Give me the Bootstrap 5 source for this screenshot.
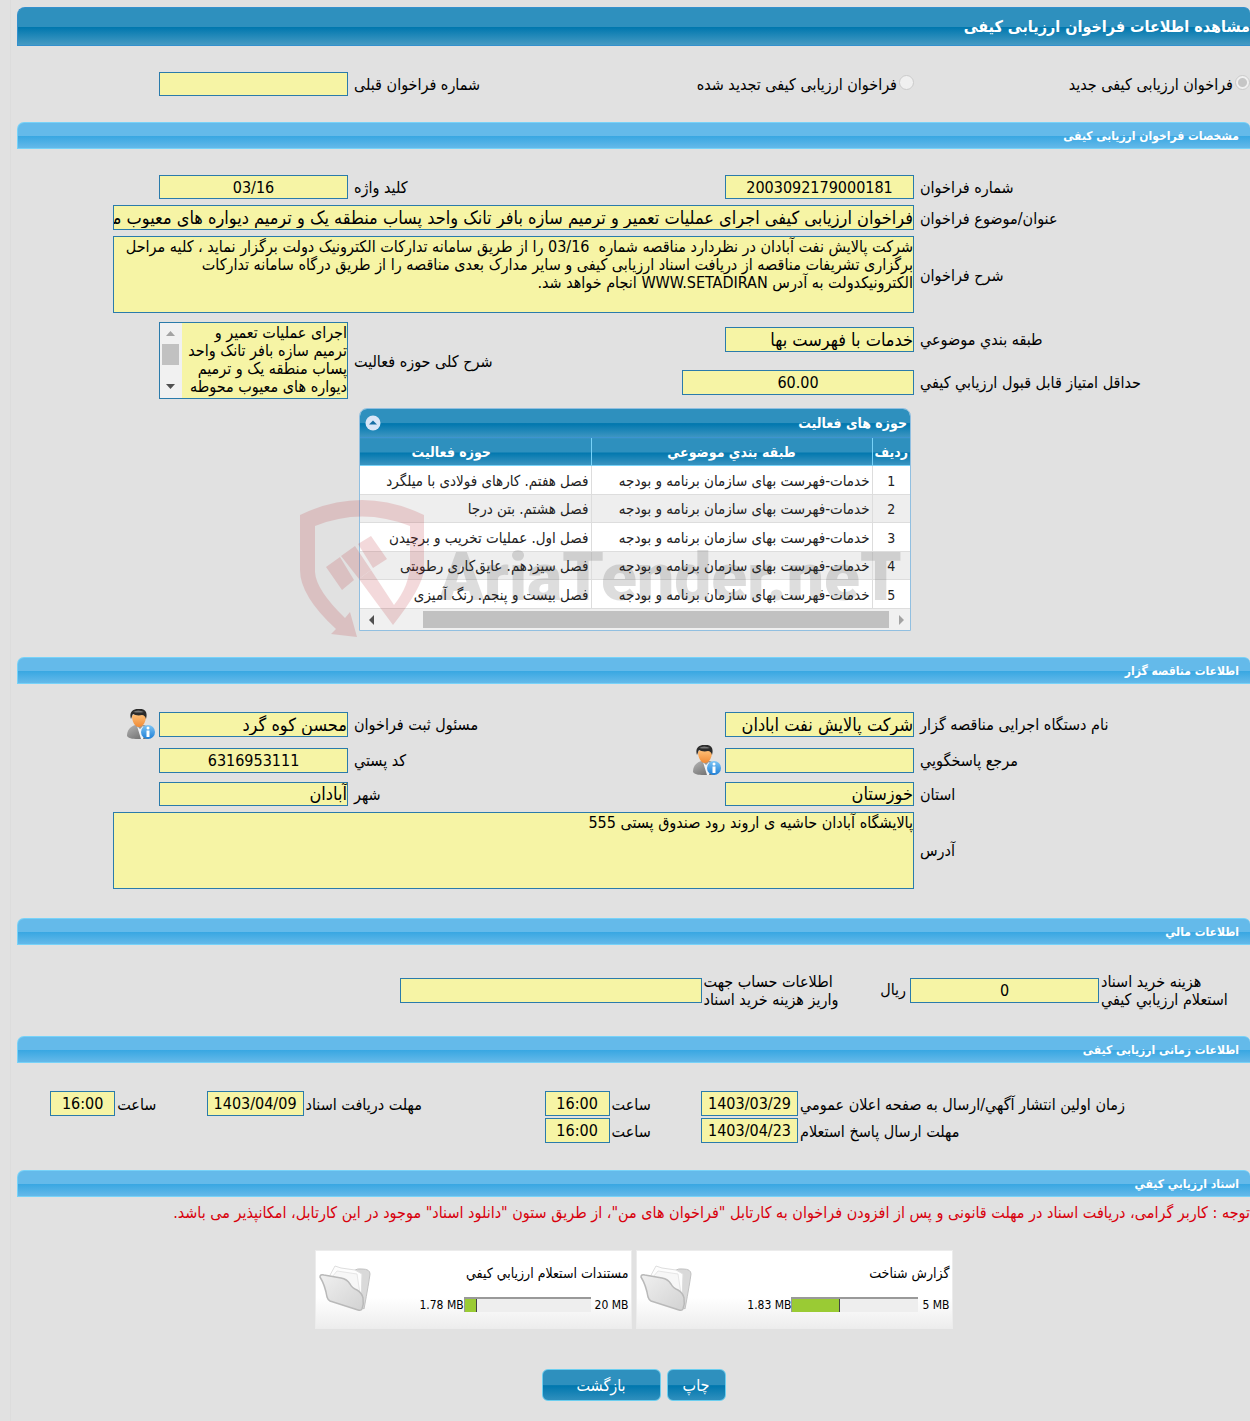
<!DOCTYPE html>
<html lang="fa" dir="rtl">
<head>
<meta charset="utf-8">
<meta name="viewport" content="width=device-width, initial-scale=1">
<title>مشاهده اطلاعات فراخوان ارزیابی کیفی</title>
<link rel="stylesheet" href="https://cdn.jsdelivr.net/npm/bootstrap@5.3.0/dist/css/bootstrap.min.css">
<script src="https://cdn.jsdelivr.net/npm/bootstrap@5.3.0/dist/js/bootstrap.bundle.min.js"></script>
<style>
body{background:#e1e1e1;color:#000;font:16px/18px "DejaVu Sans Condensed","DejaVu Sans",sans-serif;overflow-x:hidden}
.sheet{margin-left:10px;padding:7px 0 0 6px;border-left:1px solid #dcdcdc;position:relative}
.title-bar{height:39px;border:1px solid #3390cd;border-right:0;border-radius:8px 6px 0 0;color:#fff;font-size:16px;line-height:24px;font-weight:bold;background:linear-gradient(#2e90be 0 50%,#0077ae 52%,#459ac3)}
.sect-bar{height:27px;border:1px solid #77d2f8;border-right:0;border-radius:7px 6px 0 0;color:#fff;font-size:12px;font-weight:bold;padding:2px 11px 0;background:linear-gradient(#64baea 0 50%,#38a7e2 52%,#64b9e9)}
.form-grid{display:grid;grid-template-columns:330fr 287fr 279fr 337fr}
.time-grid{display:grid;grid-template-columns:450fr 97px 91fr 65px 240fr 97px 91fr 65px 33fr}
.money-grid{display:grid;grid-template-columns:150fr 189px 207fr 302px 380fr}
.form-grid>*,.time-grid>*,.money-grid>*{display:flex;align-items:center;min-width:0}
.kind-grid{padding:26px 0}
.call-grid{padding:26px 0 9px;row-gap:6px}
.area-grid{padding-bottom:9px;row-gap:9px}
.org-grid{padding:24px 0 29px;grid-template-rows:32px 40px 27px auto}
.money-grid{padding:26px 0 27px}
.time-grid{padding:28px 0 27px;row-gap:2px}
.two-rows{grid-row:span 2}
.addr-gap{padding-top:5px}
.lbl{justify-content:flex-end;white-space:nowrap;margin:0;text-align:left}
.lbl:not(.addr-gap),.kind{padding-top:2px}
.time-grid .lbl,.money-grid .lbl{padding-left:2px}
.cell{padding-right:6px}
.wide{grid-column:2/5}
.fld,.fld:focus{border:1px solid #2a7bab;border-radius:0;background:#f6f4a5;color:#000;padding:0;line-height:20px;font-size:18px;height:25px;width:189px;box-shadow:none}
.fld.digits{font-size:16px}
.fld.low{height:24px;min-height:24px}
.fld.w-wide{width:801px;max-width:100%}
.fld.w-score{width:232px}
textarea.fld,textarea.fld:focus{font-size:16px;line-height:18px;height:77px;min-height:77px;resize:none;overflow:hidden;padding:1px 0 0;display:block;white-space:pre}
.fill .fld{width:100%}
.rad{appearance:none;width:15px;height:15px;border:1px solid #cbcbcb;border-radius:50%;background:#f0f0f0;margin:0 0 5px 2px;flex:none}
.rad:checked{background:radial-gradient(#c6c6c6 0 4px,#f0f0f0 5px)}
.scroll-box{display:flex;border:1px solid #2a7bab;width:189px;background:#f6f4a5}
.scroll-box textarea.fld{border:0;width:165px;height:75px;min-height:75px}
.v-scroll{width:22px;background:#f1f1f1}
.act-panel{width:552px;margin-right:339px;border:1px solid #91bfe0;border-radius:8px 8px 0 0;overflow:hidden;background:#fff}
.act-head{height:28px;padding:0 3px 0 5px;color:#fff;font-size:14px;font-weight:bold;background:linear-gradient(#2e90be 0 50%,#0077ae 52%,#3d95c1)}
.act-table{width:100%;table-layout:fixed;border-collapse:collapse;margin:0;color:#222;font-size:15px}
.act-table th{height:28px;padding:0;text-align:center;color:#fff;font-size:14px;background:linear-gradient(#2e90be 0 50%,#0077ae 52%,#3d95c1);border-top:1px solid #3d94d1;border-bottom:1px solid #77d2f8}
.act-table th+th{border-right:1px solid #77d2f8}
.act-table td{height:28px;padding:1px 2px 0;white-space:nowrap;border-bottom:1px solid #ddd}
.act-table tr:nth-child(odd) td{height:29px}
.act-table tr:nth-child(even) td{background:#eee}
.act-table td+td{border-right:1px solid #ddd}
.act-table .row-no{font-size:14px}
.h-scroll{height:21px;background:#f0f0f0;padding:2px 4px 2px 8px}
.h-scroll .thumb{height:17px;width:466px;background:#c1c1c1}
.gap-top{margin-top:26px}
.notice{color:#d8000c;white-space:nowrap;padding:7px 0 28px;margin:0}
.doc-box{width:317px;height:79px;border:1px solid #ececec;background:linear-gradient(#fff 60%,#ededed);font-size:12px;padding:0 2px 2px 3px}
.doc-name{font-size:14px;margin-bottom:14px}
.doc-bar{width:127px;height:15px;border-radius:0;background:#eee;border:solid #999;border-width:2px 0 0 1px}
.doc-bar .progress-bar{background:#9acb34;border-right:1px solid #444}
.btn-row{gap:6px;padding:40px 0 20px}
.act-btn,.act-btn:hover{height:32px;color:#fff;font-size:16px;line-height:18px;border:1px solid #6cceef;border-radius:6px;padding:2px 0 0;width:59px;background:linear-gradient(#2e90be 0 50%,#0077ae 52%,#2f8fbd)}
.act-btn.wider{width:119px}
.wm{position:absolute;left:279px;top:500px;opacity:.16;pointer-events:none;width:620px;height:140px}
.wm-text{position:absolute;left:149px;top:33px;font:900 66px/90px Roboto,"DejaVu Sans Condensed",sans-serif;color:#333}
</style>
</head>
<body>
<svg width="0" height="0" class="position-absolute" aria-hidden="true">
<defs>
<linearGradient id="skin" x2="0" y2="1"><stop stop-color="#ffc27a"/><stop offset="1" stop-color="#f08a35"/></linearGradient>
<linearGradient id="suit" x2="1" y2="1"><stop stop-color="#b5b5b5"/><stop offset="1" stop-color="#606060"/></linearGradient>
<linearGradient id="info" x2="0" y2="1"><stop stop-color="#7cc4f5"/><stop offset="1" stop-color="#1f7fd6"/></linearGradient>
<linearGradient id="fold" x2="1" y2="1"><stop stop-color="#f0f0f0"/><stop offset="1" stop-color="#d2d2d2"/></linearGradient>
<symbol id="person" viewBox="0 0 28 31">
<path d="M0 27C0 21 3 18 8 16h9c5 2 8 5 8 11-2 3-6 3-12 3S2 30 0 27z" fill="url(#suit)"/>
<path d="M10 17l3 3 3-3 3 4-3 9h-2z" fill="#f2f4f7"/>
<path d="M5 7c0 6 3 11 7 11S19 13 19 7c-2-2-11-4-14 0z" fill="url(#skin)"/>
<path d="M4 10C2 4 5 0 11 0c7-1 10 3 8 10-1-3-2-4-4-4-4 1-7 0-9-1-1 1-1 3-2 5z" fill="#2b2b2b"/><path d="M6 3q5-3 11 0-5 1-11 0z" fill="#777"/>
<circle cx="21" cy="23" r="7" fill="url(#info)"/><circle cx="21" cy="19" r="1.500" fill="#fff"/><path d="M19.500 21.500h3V28h-3z" fill="#fff"/>
</symbol>
<symbol id="folder" viewBox="0 0 52 48">
<path d="M34 6q5-3 9-2 8 0 8 5-1 8-6 35l-10-8z" fill="#d9d9d9" stroke="#c2c2c2"/>
<path d="M10 12L16 1l6 2 14 2 7 4-1 28-28-14z" fill="#fdfdfd" stroke="#dedede"/><path d="M13 12l5-6 20 3 3 20z" fill="#f7f7f7" stroke="#e6e6e6"/>
<path d="M1 12q0-3 4-2l17 3q6 1 9 6 2 4 7 6 5 3 6 8 1 6-1 11-1 2-4 1L11 36q-2-1-3-4-2-12-7-20z" fill="url(#fold)" stroke="#b9b9b9" stroke-width="1.500"/>
</symbol>
</defs>
</svg>
<main class="sheet">
<h1 class="title-bar d-flex align-items-center m-0">مشاهده اطلاعات فراخوان ارزیابی کیفی</h1>
<div class="form-grid kind-grid">
  <label class="kind text-nowrap"><input class="rad" type="radio" name="kind" checked disabled>فراخوان ارزیابی کیفی جدید</label>
  <label class="kind cell text-nowrap"><input class="rad" type="radio" name="kind" disabled>فراخوان ارزیابی کیفی تجدید شده</label>
  <label class="lbl" for="prev">شماره فراخوان قبلی</label>
  <div class="cell"><input class="form-control fld low" id="prev" readonly></div>
</div>

<h2 class="sect-bar d-flex align-items-center m-0">مشخصات فراخوان ارزیابی کیفی</h2>
<div class="form-grid call-grid">
  <label class="lbl" for="num">شماره فراخوان</label>
  <div class="cell"><input class="form-control fld low digits text-center" id="num" value="2003092179000181" readonly></div>
  <label class="lbl" for="key">کلید واژه</label>
  <div class="cell"><input class="form-control fld low digits text-center" id="key" value="03/16" readonly></div>
  <label class="lbl" for="subj">عنوان/موضوع فراخوان</label>
  <div class="cell wide"><input class="form-control fld w-wide" id="subj" value="فراخوان ارزیابی کیفی اجرای عملیات تعمیر و ترمیم سازه بافر تانک واحد پساب منطقه یک و ترمیم دیواره های معیوب محوطه" readonly></div>
  <label class="lbl" for="desc">شرح فراخوان</label>
  <div class="cell wide"><textarea class="form-control fld w-wide" id="desc" readonly>شرکت پالایش نفت آبادان در نظردارد مناقصه شماره  03/16 را از طریق سامانه تدارکات الکترونیک دولت برگزار نماید ، کلیه مراحل
برگزاری تشریفات مناقصه از دریافت اسناد ارزیابی کیفی و سایر مدارک بعدی مناقصه را از طریق درگاه سامانه تدارکات
الکترونیکدولت به آدرس WWW.SETADIRAN انجام خواهد شد.</textarea></div>
</div>
<div class="form-grid area-grid">
  <label class="lbl" for="cat">طبقه بندي موضوعي</label>
  <div class="cell"><input class="form-control fld" id="cat" value="خدمات با فهرست بها" readonly></div>
  <label class="lbl two-rows" for="area">شرح کلی حوزه فعالیت</label>
  <div class="cell two-rows"><div class="scroll-box"><textarea class="form-control fld" id="area" readonly>اجرای عملیات تعمیر و
ترمیم سازه بافر تانک واحد
پساب منطقه یک و ترمیم
دیواره های معیوب محوطه</textarea>
  <svg class="v-scroll" viewBox="0 0 22 75" aria-hidden="true"><path d="M6 13h9l-4.500-5z" fill="#a3a3a3"/><path d="M2 21h17v21H2z" fill="#c1c1c1"/><path d="M6 61h9l-4.500 5z" fill="#505050"/></svg></div></div>
  <label class="lbl" for="score">حداقل امتياز قابل قبول ارزيابي كيفي</label>
  <div class="cell"><input class="form-control fld digits w-score text-center" id="score" value="60.00" readonly></div>
</div>

<section class="act-panel">
  <div class="act-head d-flex align-items-center justify-content-between"><span>حوزه های فعالیت</span>
  <svg width="16" height="16" viewBox="0 0 16 16" aria-hidden="true"><circle cx="8" cy="8" r="7.500" fill="#d9e6f7"/><path d="M4 9.500h8L8 5.500z" fill="#176fa5"/></svg></div>
  <table class="act-table">
  <colgroup><col style="width:38px"><col style="width:281px"><col></colgroup>
  <thead><tr><th>ردیف</th><th>طبقه بندي موضوعي</th><th><span class="pe-5">حوزه فعاليت</span></th></tr></thead>
  <tbody>
  <tr><td class="text-center row-no">1</td><td>خدمات-فهرست بهای سازمان برنامه و بودجه</td><td>فصل هفتم. کارهای فولادی با میلگرد</td></tr>
  <tr><td class="text-center row-no">2</td><td>خدمات-فهرست بهای سازمان برنامه و بودجه</td><td>فصل هشتم. بتن درجا</td></tr>
  <tr><td class="text-center row-no">3</td><td>خدمات-فهرست بهای سازمان برنامه و بودجه</td><td>فصل اول. عملیات تخریب و برچیدن</td></tr>
  <tr><td class="text-center row-no">4</td><td>خدمات-فهرست بهای سازمان برنامه و بودجه</td><td>فصل سیزدهم. عایق‌کاری رطوبتی</td></tr>
  <tr><td class="text-center row-no">5</td><td>خدمات-فهرست بهای سازمان برنامه و بودجه</td><td>فصل بیست و پنجم. رنگ آمیزی</td></tr>
  </tbody></table>
  <div class="h-scroll d-flex align-items-center">
    <svg width="9" height="10" viewBox="0 0 9 10" class="ms-2" aria-hidden="true"><path d="M2 0v10l5-5z" fill="#a3a3a3"/></svg>
    <div class="thumb"></div>
    <svg width="7" height="10" viewBox="0 0 7 10" class="me-auto" aria-hidden="true"><path d="M6 0v10L1 5z" fill="#505050"/></svg>
  </div>
</section>

<h2 class="sect-bar gap-top d-flex align-items-center mb-0">اطلاعات مناقصه گزار</h2>
<div class="form-grid org-grid">
  <label class="lbl" for="org">نام دستگاه اجرایی مناقصه گزار</label>
  <div class="cell"><input class="form-control fld" id="org" value="شرکت پالایش نفت ابادان" readonly></div>
  <label class="lbl" for="reg">مسئول ثبت فراخوان</label>
  <div class="cell"><input class="form-control fld" id="reg" value="محسن کوه گرد" readonly><svg width="28" height="31" class="me-1" role="img" aria-label="اطلاعات مسئول"><use href="#person"/></svg></div>
  <label class="lbl" for="ref">مرجع پاسخگويي</label>
  <div class="cell"><input class="form-control fld" id="ref" readonly><svg width="28" height="31" class="me-1" role="img" aria-label="اطلاعات مرجع"><use href="#person"/></svg></div>
  <label class="lbl" for="zip">كد پستي</label>
  <div class="cell"><input class="form-control fld digits text-center" id="zip" value="6316953111" readonly></div>
  <label class="lbl" for="prov">استان</label>
  <div class="cell"><input class="form-control fld low" id="prov" value="خوزستان" readonly></div>
  <label class="lbl" for="city">شهر</label>
  <div class="cell"><input class="form-control fld low" id="city" value="آبادان" readonly></div>
  <label class="lbl addr-gap" for="addr">آدرس</label>
  <div class="cell wide addr-gap"><textarea class="form-control fld w-wide" id="addr" readonly>پالایشگاه آبادان حاشیه ی اروند رود صندوق پستی 555</textarea></div>
</div>

<h2 class="sect-bar d-flex align-items-center m-0">اطلاعات مالي</h2>
<div class="money-grid">
  <label class="lbl" for="cost"><span>هزینه خرید اسناد<br>استعلام ارزيابي كيفي</span></label>
  <div class="fill"><input class="form-control fld digits text-center" id="cost" value="0" readonly></div>
  <div class="justify-content-between"><span class="pe-1">ریال</span><label class="lbl" for="acct">اطلاعات حساب جهت<br>واریز هزینه خرید اسناد</label></div>
  <div class="fill"><input class="form-control fld" id="acct" readonly></div>
</div>

<h2 class="sect-bar d-flex align-items-center m-0">اطلاعات زمانی ارزیابی کیفی</h2>
<div class="time-grid">
  <label class="lbl" for="d1">زمان اولین انتشار آگهي/ارسال به صفحه اعلان عمومي</label>
  <div class="fill"><input class="form-control fld digits text-center" id="d1" value="1403/03/29" readonly></div>
  <label class="lbl" for="t1">ساعت</label>
  <div class="fill"><input class="form-control fld digits text-center" id="t1" value="16:00" readonly></div>
  <label class="lbl" for="d2">مهلت دریافت اسناد</label>
  <div class="fill"><input class="form-control fld digits text-center" id="d2" value="1403/04/09" readonly></div>
  <label class="lbl" for="t2">ساعت</label>
  <div class="fill"><input class="form-control fld digits text-center" id="t2" value="16:00" readonly></div>
  <div></div>
  <label class="lbl" for="d3">مهلت ارسال پاسخ استعلام</label>
  <div class="fill"><input class="form-control fld digits text-center" id="d3" value="1403/04/23" readonly></div>
  <label class="lbl" for="t3">ساعت</label>
  <div class="fill"><input class="form-control fld digits text-center" id="t3" value="16:00" readonly></div>
</div>

<h2 class="sect-bar d-flex align-items-center m-0">اسناد ارزيابي كيفي</h2>
<p class="notice">توجه : کاربر گرامی، دریافت اسناد در مهلت قانونی و پس از افزودن فراخوان به کارتابل "فراخوان های من"، از طریق ستون "دانلود اسناد" موجود در این کارتابل، امکانپذیر می باشد.</p>
<div class="d-flex flex-wrap justify-content-center gap-1">
  <div class="doc-box d-flex align-items-center">
    <div class="flex-grow-1"><div class="doc-name">گزارش شناخت</div>
    <div class="d-flex align-items-center"><span dir="ltr" class="ms-1">5 MB</span><div class="progress doc-bar" dir="ltr"><div class="progress-bar" style="width:38%"></div></div><span dir="ltr">1.83 MB</span></div></div>
    <svg width="52" height="48" aria-hidden="true"><use href="#folder"/></svg>
  </div>
  <div class="doc-box d-flex align-items-center">
    <div class="flex-grow-1"><div class="doc-name">مستندات استعلام ارزيابي كيفي</div>
    <div class="d-flex align-items-center"><span dir="ltr" class="ms-1">20 MB</span><div class="progress doc-bar" dir="ltr"><div class="progress-bar" style="width:10%"></div></div><span dir="ltr">1.78 MB</span></div></div>
    <svg width="52" height="48" aria-hidden="true"><use href="#folder"/></svg>
  </div>
</div>
<div class="btn-row d-flex justify-content-center">
  <button type="button" class="btn act-btn">چاپ</button>
  <button type="button" class="btn act-btn wider">بازگشت</button>
</div>

<div class="wm" dir="ltr" aria-hidden="true">
  <svg width="135" height="140" viewBox="0 0 135 140"><path d="M10 15Q72-15 134 15V70Q132 88 103 125L69 79 81 70 104 105Q120 85 120 63V26Q72 7 25 26V72Q26 90 55 118L60 112 67 137 41 134 46 129Q10 96 10 70z" fill="#b81c24"/><path d="M36 67L50 57 64 80 52 90zM51 56L65 46 81 70 69 79zM68 44L81 36 97 59 83 68z" fill="#b81c24"/></svg>
  <span class="wm-text">AriaTender.neT</span>
</div>
</main>
</body>
</html>
